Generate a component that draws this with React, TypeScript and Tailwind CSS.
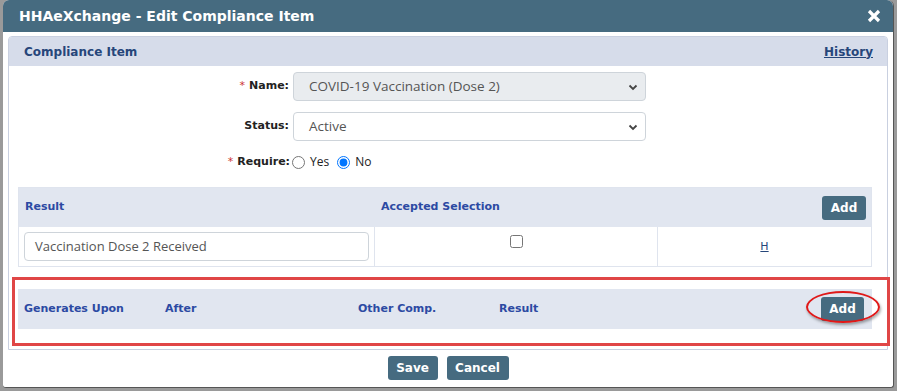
import React from 'react';

const font = { fontFamily: 'Tahoma, "DejaVu Sans", Verdana, sans-serif' };

function Chevron() {
  return (
    <svg width="12" height="12" viewBox="0 0 12 12" className="text-[#444]">
      <path d="M2.5 4.5 L6 8 L9.5 4.5" fill="none" stroke="currentColor" strokeWidth="1.8" />
    </svg>
  );
}

function Select({ value, disabled }: { value: string; disabled?: boolean }) {
  return (
    <div
      className={`flex items-center justify-between w-[353px] h-[29px] rounded-[4px] border border-[#ced4da] pl-[15px] pr-[6px] text-[13.5px] text-[#555] font-['Open_Sans',sans-serif] ${
        disabled ? 'bg-[#e9ecef]' : 'bg-white'
      }`}
    >
      <span>{value}</span>
      <Chevron />
    </div>
  );
}

function Btn({ children, className = '' }: { children: React.ReactNode; className?: string }) {
  return (
    <button
      className={`h-[24px] rounded-[3px] bg-[#466b80] text-white font-bold text-[12px] ${className}`}
      style={font}
    >
      {children}
    </button>
  );
}

export default function App() {
  return (
    <div className="w-[897px] h-[391px] bg-[#9a9a9a] overflow-hidden" style={font}>
      <div className="ml-[3px] w-[891px] h-[388px] bg-white rounded-t-[6px] rounded-b-[3px] border-r border-b border-[#555] flex flex-col">
        <div className="h-[32px] shrink-0 bg-[#466b80] rounded-t-[6px] flex items-center justify-between pl-[16px] pr-[12px]">
          <span className="text-white font-bold text-[14px]">HHAeXchange - Edit Compliance Item</span>
          <svg width="14" height="14" viewBox="0 0 14 14">
            <path d="M2 2 L12 12 M12 2 L2 12" stroke="white" strokeWidth="3.2" />
          </svg>
        </div>

        <div className="px-[5px] pt-[4px]">
          <div className="border border-[#c9d0e0] rounded-t-[4px] h-[314px] flex flex-col">
            <div className="h-[29px] bg-[#d6dcea] flex items-center justify-between pl-[15px] pr-[14px] rounded-t-[3px]">
              <span className="text-[#26467a] font-bold text-[12px]">Compliance Item</span>
              <a className="text-[#26467a] font-bold text-[12px] underline">History</a>
            </div>

            <div className="flex flex-col pt-[6px]">
              <div className="flex items-center h-[29px]">
                <div className="w-[284px] text-right pr-[4px] text-[11px] font-bold text-[#222]">
                  <span className="text-[#c33] font-normal mr-[4px]">*</span>Name:
                </div>
                <Select value="COVID-19 Vaccination (Dose 2)" disabled />
              </div>
              <div className="flex items-center h-[29px] mt-[11px]">
                <div className="w-[284px] text-right pr-[4px] text-[11px] font-bold text-[#222]">Status:</div>
                <Select value="Active" />
              </div>
              <div className="flex items-center h-[20px] mt-[11px]">
                <div className="w-[281px] text-right text-[11px] font-bold text-[#222]">
                  <span className="text-[#c33] font-normal mr-[4px]">*</span>Require:
                </div>
                <input type="radio" name="req" className="w-[13px] h-[13px] m-0 ml-[2px]" />
                <span className="text-[12px] ml-[5px] text-[#222] font-['Open_Sans',sans-serif]">Yes</span>
                <input type="radio" name="req" defaultChecked className="w-[13px] h-[13px] m-0 ml-[8px]" />
                <span className="text-[12px] ml-[5px] text-[#222] font-['Open_Sans',sans-serif]">No</span>
              </div>
            </div>

            <div className="ml-[9px] mr-[15px] mt-[15px] border border-[#dfe4ee]">
              <div className="h-[39px] bg-[#e1e6f0] flex items-center">
                <div className="w-[356px] pl-[6px] text-[11px] font-bold text-[#2c4aa3]">Result</div>
                <div className="flex-1 pl-[6px] text-[11px] font-bold text-[#2c4aa3]">Accepted Selection</div>
                <Btn className="w-[44px] h-[23px] mr-[5px]">Add</Btn>
              </div>
              <div className="h-[39px] flex">
                <div className="w-[356px] border-r border-[#dfe4ee] flex items-center pl-[5px]">
                  <div className="w-[345px] h-[29px] rounded-[4px] border border-[#ced4da] flex items-center pl-[10px] text-[13px] text-[#555] font-['Open_Sans',sans-serif]">
                    Vaccination Dose 2 Received
                  </div>
                </div>
                <div className="w-[283px] border-r border-[#dfe4ee] flex justify-center pt-[8px]">
                  <input type="checkbox" className="w-[13px] h-[13px] m-0" />
                </div>
                <div className="flex-1 flex justify-center items-center">
                  <a className="text-[11px] text-[#26467a] underline pt-[2px]">H</a>
                </div>
              </div>
            </div>

            <div className="ml-[3px] mr-[-3px] mt-[10px] border-[3px] border-[#e04646] h-[69px] pt-[9px]">
              <div className="ml-[3px] mr-[15px] h-[40px] bg-[#e1e6f0] flex items-center">
                <div className="w-[147px] pl-[6px] text-[11px] font-bold text-[#2c4aa3]">Generates Upon</div>
                <div className="w-[193px] text-[11px] font-bold text-[#2c4aa3]">After</div>
                <div className="w-[141px] text-[11px] font-bold text-[#2c4aa3]">Other Comp.</div>
                <div className="flex-1 text-[11px] font-bold text-[#2c4aa3]">Result</div>
                <div className="relative mr-[8px] flex">
                  <Btn className="w-[43px]">Add</Btn>
                  <div className="absolute left-[-15px] top-[-6px] w-[74px] h-[32px] rounded-[50%] border-[2px] border-[#e01818] shadow-[1px_2px_3px_rgba(0,0,0,0.35)] pointer-events-none" />
                </div>
              </div>
            </div>
          </div>
        </div>

        <div className="flex justify-center gap-[9px] mt-[6px]">
          <Btn className="w-[50px]">Save</Btn>
          <Btn className="w-[62px]">Cancel</Btn>
        </div>
      </div>
    </div>
  );
}
